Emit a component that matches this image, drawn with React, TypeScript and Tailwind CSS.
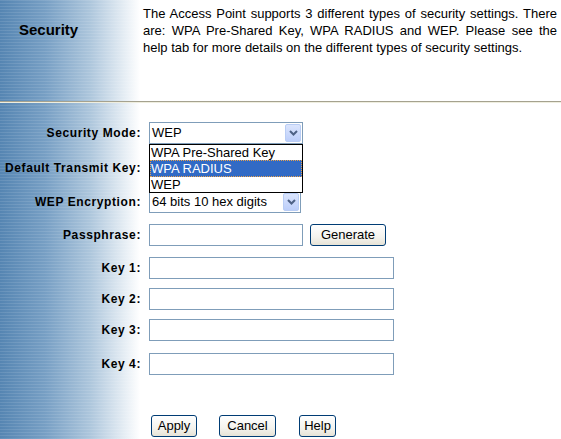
import type { ReactNode } from 'react'

const font = "font-['Liberation_Sans',Arial,sans-serif]"

function Arrow() {
  return (
    <div className="my-px mr-px flex w-[16px] items-center justify-center rounded-[2px] border border-[#b9cdf5] bg-[linear-gradient(to_bottom,#dbe5fd,#bccefa)]">
      <svg width="9" height="6" viewBox="0 0 9 6">
        <path d="M1 1 L4.5 4.5 L8 1" fill="none" stroke="#4d6185" strokeWidth="2" />
      </svg>
    </div>
  )
}

function FakeSelect({ value, width }: { value: string; width: string }) {
  return (
    <div className={`flex h-[22px] ${width} border border-[#7f9db9] bg-white`}>
      <div className="flex flex-1 items-center pl-[2px] text-[13px] text-black">{value}</div>
      <Arrow />
    </div>
  )
}

function TextBox({ width }: { width: string }) {
  return <div className={`h-[22px] ${width} border border-[#7f9db9] bg-white`} />
}

function XpButton({ children, width }: { children: ReactNode; width: string }) {
  return (
    <button
      className={`flex h-[22px] ${width} items-center justify-center rounded-[3px] border border-[#003c74] bg-[linear-gradient(to_bottom,#ffffff,#f4f3ee_60%,#e6e3d6)] text-[13px] text-black`}
    >
      {children}
    </button>
  )
}

function Row({ label, mt, children }: { label: string; mt: string; children: ReactNode }) {
  return (
    <div className={`flex items-center ${mt}`}>
      <div className="w-[141px] text-right text-[12px] font-bold tracking-[0.6px] text-black">{label}</div>
      <div className="ml-2">{children}</div>
    </div>
  )
}

export default function App() {
  return (
    <div
      className={`${font} h-[439px] w-[561px] overflow-hidden bg-white bg-[repeating-linear-gradient(to_bottom,rgba(255,255,255,0.1)_0px,rgba(255,255,255,0.1)_1px,transparent_1px,transparent_3px),linear-gradient(to_right,#5585b2_0px,#779fc4_45px,#adc6dc_90px,#ffffff_140px)]`}
    >
      <div className="flex h-[101px]">
        <div className="w-[143px] pl-[19px] pt-[19px] text-[15px] font-bold text-black">Security</div>
        <p className="w-[414px] pt-[5px] text-justify text-[13px] leading-[17px] text-black">
          The Access Point supports 3 different types of security settings. There are: WPA Pre-Shared Key, WPA RADIUS and WEP. Please see the help tab for more details on the different types of security settings.
        </p>
      </div>
      <div className="h-px bg-[#a5a28f]" />
      <div className="h-px bg-[#efeedf]" />

      <Row label="Security Mode:" mt="mt-[19px]">
        <div className="relative">
          <FakeSelect value="WEP" width="w-[154px]" />
          <div className="absolute left-0 top-full z-10 w-[154px] border border-black bg-white text-[13px] leading-[15px] text-black">
            <div className="pl-[1px]">WPA Pre-Shared Key</div>
            <div className="border border-dotted border-[#e9a24c] bg-[#316ac5] text-white">WPA RADIUS</div>
            <div className="pl-[1px]">WEP</div>
          </div>
        </div>
      </Row>
      <Row label="Default Transmit Key:" mt="mt-[13px]">
        <div className="h-[22px] w-[60px]" />
      </Row>
      <Row label="WEP Encryption:" mt="mt-[12px]">
        <FakeSelect value="64 bits 10 hex digits" width="w-[152px]" />
      </Row>
      <Row label="Passphrase:" mt="mt-[11px]">
        <div className="flex items-center gap-[7px]">
          <TextBox width="w-[154px]" />
          <XpButton width="w-[76px]">Generate</XpButton>
        </div>
      </Row>
      <Row label="Key 1:" mt="mt-[11px]">
        <TextBox width="w-[245px]" />
      </Row>
      <Row label="Key 2:" mt="mt-[9px]">
        <TextBox width="w-[245px]" />
      </Row>
      <Row label="Key 3:" mt="mt-[9px]">
        <TextBox width="w-[245px]" />
      </Row>
      <Row label="Key 4:" mt="mt-[12px]">
        <TextBox width="w-[245px]" />
      </Row>

      <div className="ml-[151px] mt-[40px] flex items-center">
        <XpButton width="w-[46px]">Apply</XpButton>
        <div className="ml-[22px]">
          <XpButton width="w-[57px]">Cancel</XpButton>
        </div>
        <div className="ml-[23px]">
          <XpButton width="w-[37px]">Help</XpButton>
        </div>
      </div>
    </div>
  )
}
